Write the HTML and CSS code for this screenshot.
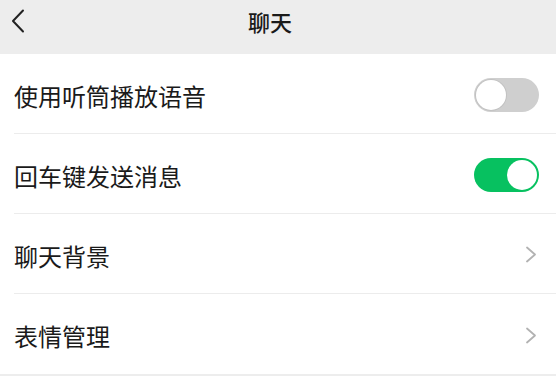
FILE: index.html
```html
<!DOCTYPE html>
<html lang="zh-CN">
<head>
<meta charset="utf-8">
<link rel="stylesheet" href="styles.css">
</head>
<body>
<div class="page">
  <header class="topbar">
    <span class="back">
      <svg width="14" height="24" viewBox="0 0 14 24"><path d="M12 1.5 L2 12 L12 22.5" fill="none" stroke="#222" stroke-width="2" stroke-linecap="round" stroke-linejoin="round"/></svg>
    </span>
    <h1 class="title">聊天</h1>
  </header>
  <ul class="list">
    <li class="row"><span class="label">使用听筒播放语音</span><span class="switch"><span class="knob"></span></span></li>
    <li class="row"><span class="label">回车键发送消息</span><span class="switch on"><span class="knob"></span></span></li>
    <li class="row"><span class="label">聊天背景</span><span class="arrow"><svg width="12" height="17" viewBox="0 0 12 17"><path d="M2 1.5 L10 8.5 L2 15.5" fill="none" stroke="#b2b2b2" stroke-width="1.8" stroke-linecap="round" stroke-linejoin="round"/></svg></span></li>
    <li class="row"><span class="label">表情管理</span><span class="arrow"><svg width="12" height="17" viewBox="0 0 12 17"><path d="M2 1.5 L10 8.5 L2 15.5" fill="none" stroke="#b2b2b2" stroke-width="1.8" stroke-linecap="round" stroke-linejoin="round"/></svg></span></li>
  </ul>
</div>
</body>
</html>
```
FILE: styles.css
```css
* { box-sizing: border-box; margin: 0; padding: 0; }
html, body { width: 556px; height: 376px; overflow: hidden; }
body {
  background: #ededed;
  font-family: "Noto Sans CJK SC", "Noto Sans", sans-serif;
  color: #1a1a1a;
}
.topbar {
  position: relative;
  height: 54px;
  background: #ededed;
  display: flex;
  align-items: flex-start;
  justify-content: center;
  padding-right: 16px;
}
.back {
  position: absolute;
  left: 11px;
  top: 9px;
  display: block;
  line-height: 0;
}
.title {
  font-size: 22px;
  font-weight: 500;
  line-height: 22px;
  margin-top: 10px;
  color: #1a1a1a;
}
.list {
  list-style: none;
  background: #fff;
}
.row {
  height: 80px;
  margin-left: 14px;
  padding-right: 17px;
  display: flex;
  align-items: center;
  justify-content: space-between;
  border-bottom: 1px solid #ececec;
}
.row:last-child { border-bottom: none; }
.label {
  font-size: 24px;
  line-height: 24px;
  padding-top: 4px;
  color: #1a1a1a;
}
.switch {
  width: 65px;
  height: 34px;
  border-radius: 17px;
  background: #cfcfcf;
  padding: 2px;
  display: flex;
  justify-content: flex-start;
  margin-top: 2px;
}
.switch .knob {
  width: 30px;
  height: 30px;
  border-radius: 50%;
  background: #fff;
  box-shadow: 0 0 0 1px #c2c2c2;
}
.switch.on {
  background: #07c160;
  justify-content: flex-end;
}
.switch.on .knob { box-shadow: none; }
.arrow {
  line-height: 0;
  margin-right: 2px;
  margin-top: 2px;
}
```
